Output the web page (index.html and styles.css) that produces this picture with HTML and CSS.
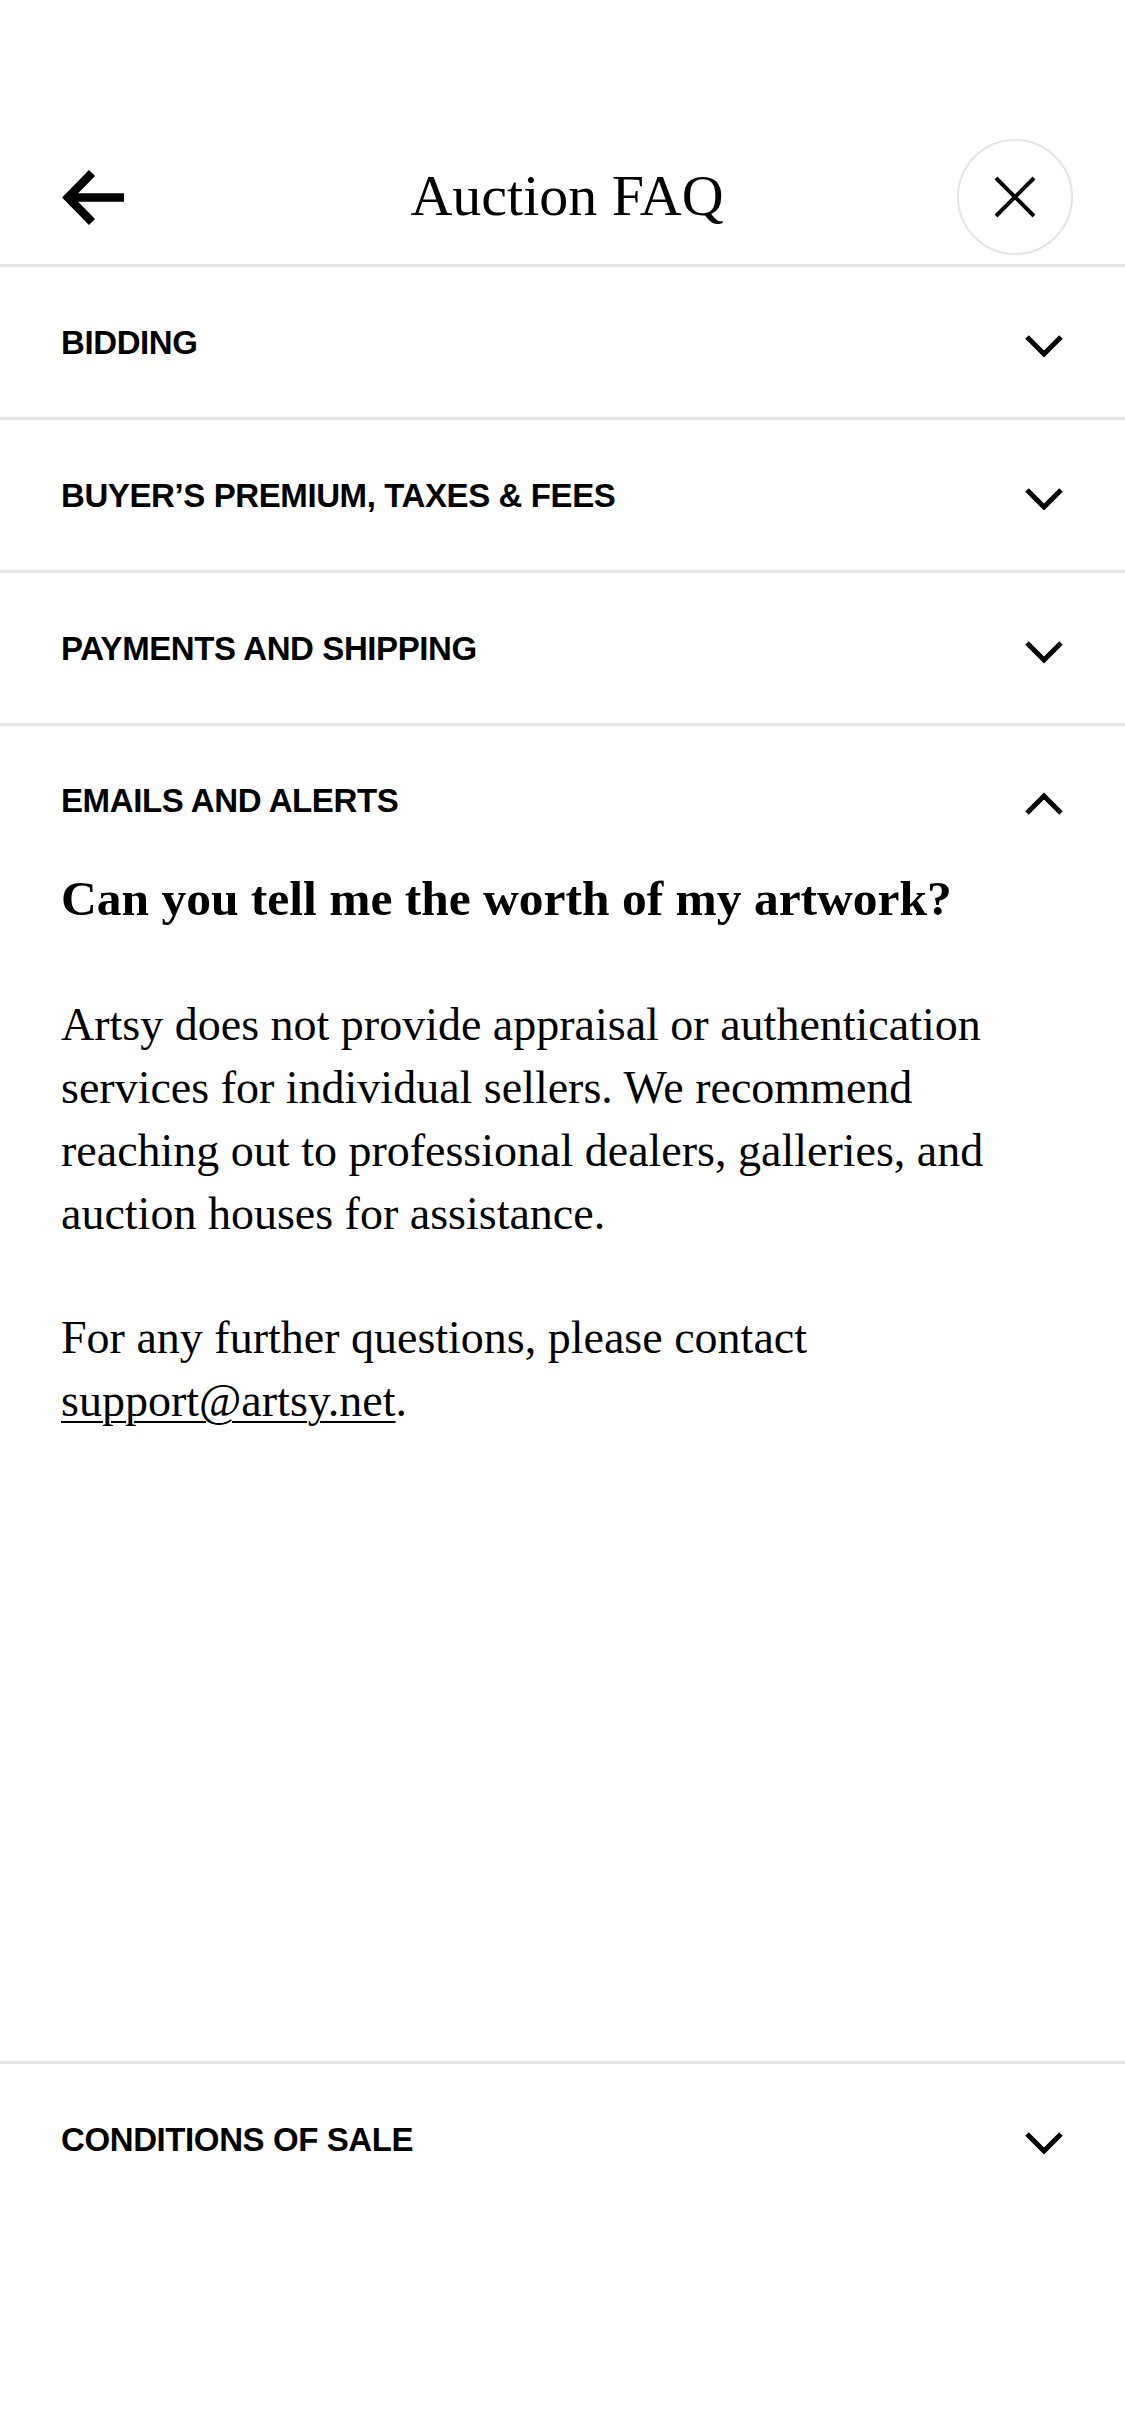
FILE: index.html
```html
<!DOCTYPE html>
<html lang="en">
<head>
<meta charset="utf-8">
<title>Auction FAQ</title>
<link rel="stylesheet" href="styles.css">
</head>
<body>
<div class="page">
  <header class="topbar">
    <button class="back" aria-label="Back">
      <svg class="back-icon" viewBox="0 0 64 57" width="64" height="57"><path d="M8 28.5 H63 M31 4 L7 28.5 L31 53" fill="none" stroke="#000" stroke-width="8.5" stroke-linejoin="miter"/></svg>
    </button>
    <h1 class="title">Auction FAQ</h1>
    <button class="close" aria-label="Close">
      <svg viewBox="0 0 44 44" width="44" height="44"><path d="M3 3 L41 41 M41 3 L3 41" fill="none" stroke="#000" stroke-width="4"/></svg>
    </button>
  </header>

  <section class="item">
    <div class="item-head">
      <span class="item-label">BIDDING</span>
      <svg class="chev" viewBox="0 0 42 26" width="42" height="26"><path d="M4 4 L21 21 L38 4" fill="none" stroke="#000" stroke-width="5"/></svg>
    </div>
  </section>
  <section class="item">
    <div class="item-head">
      <span class="item-label">BUYER’S PREMIUM, TAXES &amp; FEES</span>
      <svg class="chev" viewBox="0 0 42 26" width="42" height="26"><path d="M4 4 L21 21 L38 4" fill="none" stroke="#000" stroke-width="5"/></svg>
    </div>
  </section>
  <section class="item">
    <div class="item-head">
      <span class="item-label">PAYMENTS AND SHIPPING</span>
      <svg class="chev" viewBox="0 0 42 26" width="42" height="26"><path d="M4 4 L21 21 L38 4" fill="none" stroke="#000" stroke-width="5"/></svg>
    </div>
  </section>
  <section class="item open">
    <div class="item-head">
      <span class="item-label">EMAILS AND ALERTS</span>
      <svg class="chev" viewBox="0 0 42 26" width="42" height="26"><path d="M4 22 L21 5 L38 22" fill="none" stroke="#000" stroke-width="5"/></svg>
    </div>
    <div class="panel">
      <h2 class="question">Can you tell me the worth of my artwork?</h2>
      <p class="answer">Artsy does not provide appraisal or authentication services for individual sellers. We recommend reaching out to professional dealers, galleries, and auction houses for assistance.</p>
      <p class="answer">For any further questions, please contact <a class="link" href="#">support@artsy.net</a>.</p>
    </div>
  </section>
  <section class="item last">
    <div class="item-head">
      <span class="item-label">CONDITIONS OF SALE</span>
      <svg class="chev" viewBox="0 0 42 26" width="42" height="26"><path d="M4 4 L21 21 L38 4" fill="none" stroke="#000" stroke-width="5"/></svg>
    </div>
  </section>
</div>
</body>
</html>
```

FILE: styles.css
```css
* {
  box-sizing: border-box;
}

html, body {
  margin: 0;
  padding: 0;
  background: #fff;
  color: #000;
}

.page {
  width: 1125px;
  height: 2436px;
  display: flex;
  flex-direction: column;
  padding-bottom: 222px;
  overflow: hidden;
}

.topbar {
  display: grid;
  grid-template-columns: 1fr auto 1fr;
  align-items: center;
  padding: 139px 52px 9px 61px;
  border-bottom: 3px solid #e5e5e5;
  flex: none;
}

.back {
  justify-self: start;
  background: none;
  border: 0;
  padding: 0;
  width: 64px;
  height: 57px;
  display: block;
  margin-top: 1px;
}

.back-icon {
  display: block;
}

.title {
  margin: 0;
  padding-bottom: 3px;
  font-family: "Liberation Serif", "Times New Roman", serif;
  font-weight: 400;
  font-size: 58px;
  line-height: 1;
  text-align: center;
}

.close {
  justify-self: end;
  width: 116px;
  height: 116px;
  border-radius: 50%;
  border: 2px solid #e5e5e5;
  background: #fff;
  padding: 0;
  display: flex;
  align-items: center;
  justify-content: center;
}

.close svg {
  display: block;
}

.item {
  flex: none;
  border-bottom: 3px solid #e5e5e5;
}

.item.last {
  border-bottom: 0;
}

.item.open {
  flex: 1;
}

.item-head {
  height: 150px;
  display: flex;
  align-items: center;
  justify-content: space-between;
  padding: 0 61px 0 61px;
}

.item.open .item-head {
  height: 143px;
  padding-top: 5px;
}

.item-label {
  font-family: "Liberation Sans", Arial, sans-serif;
  font-weight: 700;
  font-size: 33px;
  line-height: 1;
  letter-spacing: -0.4px;
}

.chev {
  display: block;
  margin-top: 8px;
  margin-right: -1px;
}

.panel {
  padding: 0 61px;
}

.question {
  margin: 0;
  font-family: "Liberation Serif", "Times New Roman", serif;
  font-weight: 700;
  font-size: 49.5px;
  line-height: 60px;
}

.answer {
  margin: 64px 0 0 0;
  font-family: "Liberation Serif", "Times New Roman", serif;
  font-weight: 400;
  font-size: 46px;
  line-height: 63px;
}

.answer + .answer {
  margin-top: 61px;
}

.link {
  color: #000;
  text-decoration: underline;
  text-decoration-thickness: 2px;
  text-underline-offset: 5px;
}
```
